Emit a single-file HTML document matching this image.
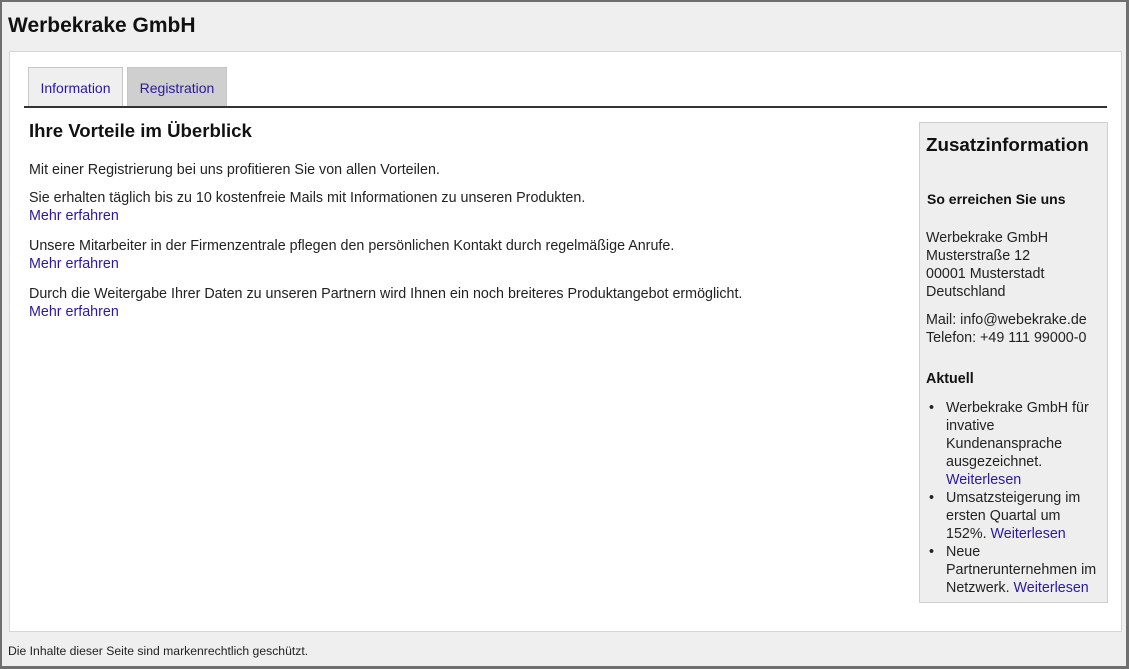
<!DOCTYPE html>
<html><head><meta charset="utf-8"><style>
*{margin:0;padding:0;box-sizing:border-box}
body{width:1129px;height:669px;background:#efefef;font-family:"Liberation Sans",Arial,sans-serif;color:#222;position:relative;overflow:hidden;font-size:14.3px}
.frame{position:absolute;left:0;top:0;width:1129px;height:669px;border:2px solid #6f6f6f;border-right-width:3px;border-bottom-width:3px}
.a{position:absolute;white-space:nowrap}
a{color:#2a1a9a;text-decoration:none}
.panel{position:absolute;left:9px;top:51px;width:1113px;height:581px;background:#fff;border:1px solid #d6d6d6}
.tab{position:absolute;top:67px;height:40px;border:1px solid #c6c6c6;border-bottom:none;font-size:14px;line-height:40px;text-align:center;color:#2a1a9a}
.side{position:absolute;left:919px;top:122px;width:189px;height:481px;background:#eee;border:1px solid #cfcfcf}
</style></head><body>
<div class="frame"></div>
<div class="a" style="left:8px;top:14px;font-size:21px;font-weight:bold;color:#111">Werbekrake GmbH</div>
<div class="panel"></div>
<div class="tab" style="left:28px;width:95px;background:#efefef">Information</div>
<div class="tab" style="left:127px;width:100px;background:#cfcfcf">Registration</div>
<div class="a" style="left:24px;top:106px;width:1083px;height:2px;background:#333"></div>
<div class="a" style="left:29px;top:120px;font-size:18.6px;font-weight:bold;color:#111">Ihre Vorteile im Überblick</div>
<div class="a" style="left:29px;top:161px;line-height:18px">Mit einer Registrierung bei uns profitieren Sie von allen Vorteilen.</div>
<div class="a" style="left:29px;top:189px;line-height:18px">Sie erhalten täglich bis zu 10 kostenfreie Mails mit Informationen zu unseren Produkten.<br><a>Mehr erfahren</a></div>
<div class="a" style="left:29px;top:237px;line-height:18px">Unsere Mitarbeiter in der Firmenzentrale pflegen den persönlichen Kontakt durch regelmäßige Anrufe.<br><a>Mehr erfahren</a></div>
<div class="a" style="left:29px;top:285px;line-height:18px">Durch die Weitergabe Ihrer Daten zu unseren Partnern wird Ihnen ein noch breiteres Produktangebot ermöglicht.<br><a>Mehr erfahren</a></div>
<div class="side"></div>
<div class="a" style="left:926px;top:134px;font-size:18.8px;font-weight:bold;color:#111">Zusatzinformation</div>
<div class="a" style="left:927px;top:191px;font-size:14px;font-weight:bold;color:#111">So erreichen Sie uns</div>
<div class="a" style="left:926px;top:229px;line-height:18px">Werbekrake GmbH<br>Musterstraße 12<br>00001 Musterstadt<br>Deutschland</div>
<div class="a" style="left:926px;top:311px;line-height:18px">Mail: info@webekrake.de<br>Telefon: +49 111 99000-0</div>
<div class="a" style="left:926px;top:371px;font-weight:bold;color:#111">Aktuell</div>
<div class="a" style="left:929px;top:399px;line-height:18px">•</div>
<div class="a" style="left:946px;top:399px;line-height:18px">Werbekrake GmbH für<br>invative<br>Kundenansprache<br>ausgezeichnet.<br><a>Weiterlesen</a></div>
<div class="a" style="left:929px;top:489px;line-height:18px">•</div>
<div class="a" style="left:946px;top:489px;line-height:18px">Umsatzsteigerung im<br>ersten Quartal um<br>152%. <a>Weiterlesen</a></div>
<div class="a" style="left:929px;top:543px;line-height:18px">•</div>
<div class="a" style="left:946px;top:543px;line-height:18px">Neue<br>Partnerunternehmen im<br>Netzwerk. <a>Weiterlesen</a></div>
<div class="a" style="left:8px;top:644px;font-size:12.2px;color:#222">Die Inhalte dieser Seite sind markenrechtlich geschützt.</div>
</body></html>
